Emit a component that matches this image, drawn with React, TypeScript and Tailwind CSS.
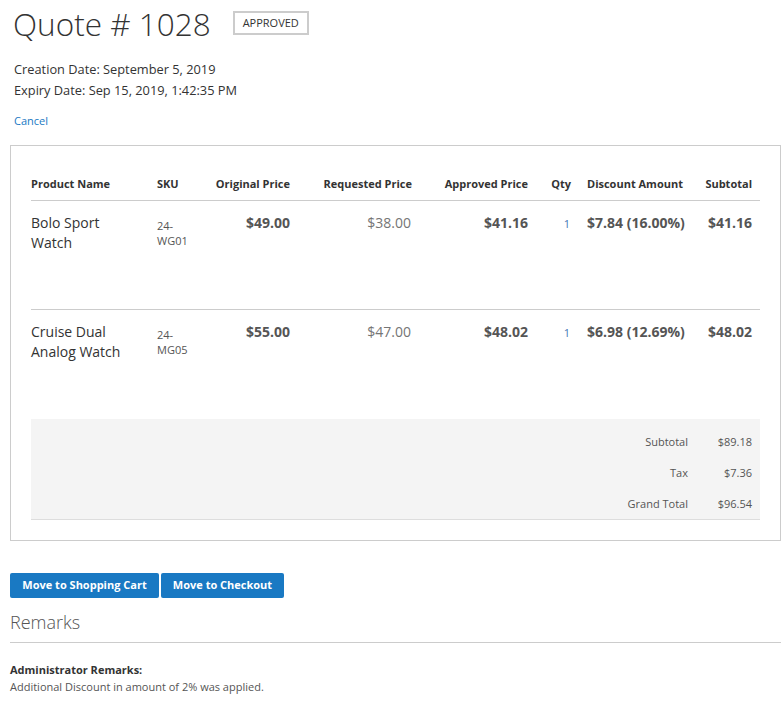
import React from 'react';

type Item = {
  name: string[];
  sku: string[];
  original: string;
  requested: string;
  approved: string;
  qty: string;
  discount: string;
  subtotal: string;
};

const items: Item[] = [
  {
    name: ['Bolo Sport', 'Watch'],
    sku: ['24-', 'WG01'],
    original: '$49.00',
    requested: '$38.00',
    approved: '$41.16',
    qty: '1',
    discount: '$7.84 (16.00%)',
    subtotal: '$41.16',
  },
  {
    name: ['Cruise Dual', 'Analog Watch'],
    sku: ['24-', 'MG05'],
    original: '$55.00',
    requested: '$47.00',
    approved: '$48.02',
    qty: '1',
    discount: '$6.98 (12.69%)',
    subtotal: '$48.02',
  },
];

const cols = 'grid grid-cols-[119px_60px_88px_122px_116px_43px_118px_63px]';

const App: React.FC = () => {
  return (
    <div className="min-h-[705px] w-[784px] bg-white font-['Open_Sans',sans-serif] text-[#333]">
      {/* title */}
      <div className="flex items-center pl-[13px] pt-[2px]">
        <h1 className="text-[31.5px] font-light leading-[44px] text-[#333]">Quote # 1028</h1>
        <span className="ml-[22px] mt-[-2px] border-2 border-[#ccc] px-[8px] py-[2px] text-[11px] uppercase leading-[16px] text-[#333]">
          Approved
        </span>
      </div>

      <div className="mt-[13px] pl-[14px] text-[12.8px] leading-[21px]">
        <div>Creation Date: September 5, 2019</div>
        <div>Expiry Date: Sep 15, 2019, 1:42:35 PM</div>
      </div>

      <div className="mt-[12px] pl-[14px] text-[11px] leading-[16px] text-[#1979c3]">Cancel</div>

      {/* quote box */}
      <div className="mx-[10px] mt-[16px] w-[771px] border border-[#ccc] px-[20px] pb-[20px] pt-[30px]">
        <div className={`${cols} border-b border-[#ccc] pb-[9px] text-[11px] font-bold leading-[15px]`}>
          <div>Product Name</div>
          <div className="pl-[7px]">SKU</div>
          <div className="pr-[8px] text-right">Original Price</div>
          <div className="pr-[8px] text-right">Requested Price</div>
          <div className="pr-[8px] text-right">Approved Price</div>
          <div className="pr-[8px] text-right">Qty</div>
          <div className="pl-[8px]">Discount Amount</div>
          <div className="pr-[8px] text-right">Subtotal</div>
        </div>

        {items.map((it, i) => (
          <div
            key={i}
            className={`${cols} h-[109px] pt-[12px] ${i === 0 ? 'border-b border-[#ccc]' : ''}`}
          >
            <div className="text-[14px] leading-[20px] text-[#333]">
              {it.name[0]}
              <br />
              {it.name[1]}
            </div>
            <div className="pl-[7px] pt-[5px] text-[11px] leading-[15px] text-[#555]">
              {it.sku[0]}
              <br />
              {it.sku[1]}
            </div>
            <div className="pr-[8px] text-right text-[14px] font-bold leading-[20px] text-[#555]">{it.original}</div>
            <div className="pr-[9px] text-right text-[14px] leading-[20px] text-[#757575]">{it.requested}</div>
            <div className="pr-[8px] text-right text-[14px] font-bold leading-[20px] text-[#555]">{it.approved}</div>
            <div className="pr-[9px] pt-[2px] text-right text-[11px] leading-[18px] text-[#3f76b5]">{it.qty}</div>
            <div className="pl-[8px] text-[14px] font-bold leading-[20px] text-[#555]">{it.discount}</div>
            <div className="pr-[8px] text-right text-[14px] font-bold leading-[20px] text-[#555]">{it.subtotal}</div>
          </div>
        ))}

        <div className="border-b border-[#ddd] bg-[#f4f4f4] pb-[7px] pt-[15px] text-[11px] leading-[16px] text-[#555]">
          {[
            ['Subtotal', '$89.18'],
            ['Tax', '$7.36'],
            ['Grand Total', '$96.54'],
          ].map(([label, value], i) => (
            <div key={label} className={`flex justify-end ${i > 0 ? 'mt-[15px]' : ''}`}>
              <div className="text-right">{label}</div>
              <div className="w-[72px] pr-[8px] text-right">{value}</div>
            </div>
          ))}
        </div>
      </div>

      {/* actions */}
      <div className="mt-[32px] flex gap-[2px] pl-[10px]">
        <button className="h-[25px] w-[149px] rounded-[2px] bg-[#1979c3] text-[11px] font-bold text-white">
          Move to Shopping Cart
        </button>
        <button className="h-[25px] w-[123px] rounded-[2px] bg-[#1979c3] text-[11px] font-bold text-white">
          Move to Checkout
        </button>
      </div>

      {/* remarks */}
      <div className="mx-[10px] mt-[10px] w-[771px] border-b border-[#ccc] pb-[6px]">
        <h2 className="text-[18px] font-light leading-[28px] text-[#555]">Remarks</h2>
      </div>
      <div className="mt-[18px] pl-[10px] text-[11px] leading-[17px]">
        <div className="font-bold text-[#333]">Administrator Remarks:</div>
        <div className="text-[#555]">Additional Discount in amount of 2% was applied.</div>
      </div>
    </div>
  );
};

export default App;
